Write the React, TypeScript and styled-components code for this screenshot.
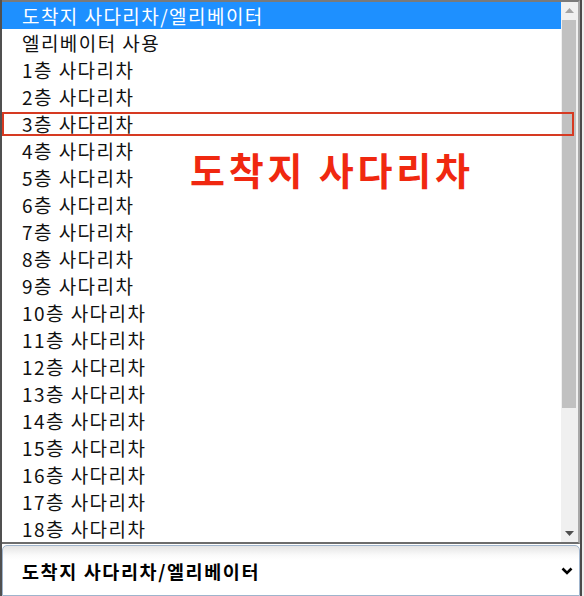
import React from 'react';
import styled, { createGlobalStyle } from 'styled-components';

const GlobalStyle = createGlobalStyle`
  html, body {
    margin: 0;
    padding: 0;
    background: #ececec;
  }
  body {
    font-family: "Noto Sans CJK KR", "Noto Sans", sans-serif;
  }
`;

const Frame = styled.div`
  position: relative;
  box-sizing: border-box;
  width: 582px;
  height: 596px;
  border-left: 2px solid #505050;
  border-right: 2px solid #4a4a4a;
  background: #fff;
  display: flex;
  flex-direction: column;
  overflow: hidden;
`;

const ListBox = styled.div`
  box-sizing: border-box;
  height: 544px;
  border-top: 2px solid #7a7a7a;
  border-right: 2px solid #a9a9a9;
  border-bottom: 2px solid #6d6d6d;
  display: flex;
`;

const Options = styled.ul`
  flex: 1;
  margin: 0;
  padding: 0;
  list-style: none;
`;

const Option = styled.li<{ $active?: boolean }>`
  height: 27px;
  display: flex;
  align-items: center;
  padding-left: 20px;
  font-size: 19px;
  letter-spacing: 1.45px;
  color: ${(p) => (p.$active ? '#fff' : '#111')};
  background: ${(p) => (p.$active ? '#1e90ff' : 'transparent')};
  white-space: nowrap;
`;

const Scrollbar = styled.div`
  width: 17px;
  background: #f0f0f0;
  display: flex;
  flex-direction: column;
`;

const ArrowButton = styled.div`
  height: 17px;
  display: flex;
  align-items: center;
  justify-content: center;
`;

const Track = styled.div`
  flex: 1;
  padding: 1px 0 0 1px;
`;

const Thumb = styled.div`
  width: 14px;
  height: 388px;
  background: #c1c1c1;
`;

const SelectBox = styled.div`
  box-sizing: border-box;
  height: 51px;
  margin-top: 1px;
  border: 1px solid #9fb4cc;
  border-radius: 5px 5px 0 0;
  background: linear-gradient(#e4e4e4 0, #fafafa 9px, #fff 14px);
  display: flex;
  align-items: center;
  justify-content: space-between;
  padding: 0 6px 0 19px;
  font-size: 18.5px;
  letter-spacing: 1.6px;
  font-weight: 700;
  color: #000;
`;

const MarkBox = styled.div`
  position: absolute;
  left: 0;
  top: 112px;
  width: 572px;
  height: 24px;
  box-sizing: border-box;
  border: 2px solid #d63a22;
  pointer-events: none;
`;

const Caption = styled.div`
  position: absolute;
  left: 188px;
  top: 150px;
  font-size: 38px;
  letter-spacing: 3.8px;
  line-height: 1;
  font-weight: 700;
  color: #f02810;
  white-space: nowrap;
`;

const options = [
  '도착지 사다리차/엘리베이터',
  '엘리베이터 사용',
  ...Array.from({ length: 18 }, (_, i) => `${i + 1}층 사다리차`),
];

const Triangle = ({ up, color }: { up?: boolean; color: string }) => (
  <svg width="9" height="5" viewBox="0 0 9 5">
    <path d={up ? 'M0 5 L4.5 0 L9 5 Z' : 'M0 0 L9 0 L4.5 5 Z'} fill={color} />
  </svg>
);

const Chevron = () => (
  <svg width="12" height="8" viewBox="0 0 12 8">
    <path d="M1.5 1.5 L6 6 L10.5 1.5" fill="none" stroke="#000" strokeWidth="2.6" />
  </svg>
);

export default function App() {
  return (
    <>
      <GlobalStyle />
      <Frame>
        <ListBox>
          <Options>
            {options.map((o, i) => (
              <Option key={o} $active={i === 0}>
                {o}
              </Option>
            ))}
          </Options>
          <Scrollbar>
            <ArrowButton>
              <Triangle up color="#a3a3a3" />
            </ArrowButton>
            <Track>
              <Thumb />
            </Track>
            <ArrowButton>
              <Triangle color="#505050" />
            </ArrowButton>
          </Scrollbar>
        </ListBox>
        <SelectBox>
          <span>도착지 사다리차/엘리베이터</span>
          <Chevron />
        </SelectBox>
        <MarkBox />
        <Caption>도착지 사다리차</Caption>
      </Frame>
    </>
  );
}
